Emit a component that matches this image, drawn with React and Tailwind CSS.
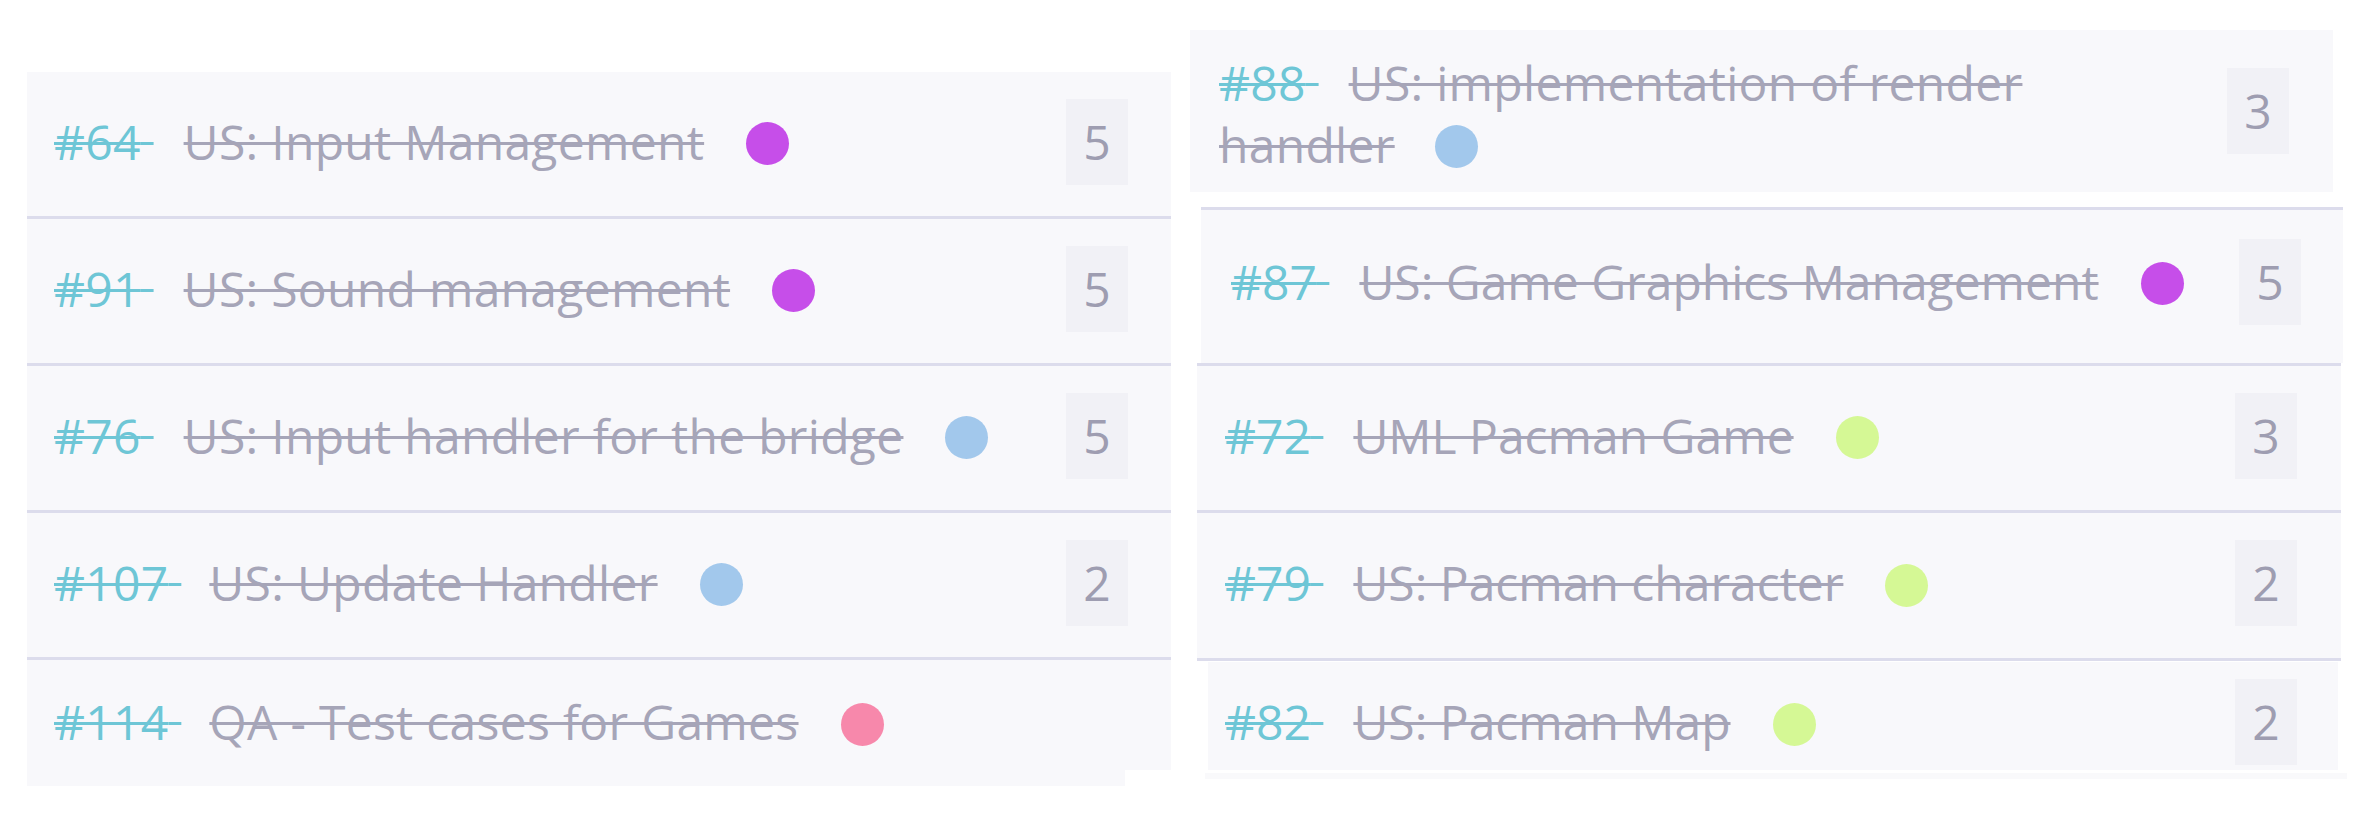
import React from "react";

const FONT = { fontFamily: '"Open Sans", "Noto Sans", sans-serif' };

function Item({ id, title, dot, idGap = "ml-[30px]", dotGap = "ml-[42px]", extra }) {
  return (
    <div className="flex-1 min-w-0 leading-[62px]">
      <span className="line-through text-[#6ec6d6] decoration-[3px]">{id}{"\u00a0"}</span>
      <span className={`${idGap} line-through text-[#a6a5b8] decoration-[3px]`}>{title}</span>
      {extra}
      <span className={`${dotGap} inline-block w-[43px] h-[43px] rounded-full align-middle relative -top-[3px] ${dot}`} />
    </div>
  );
}

function Badge({ n }) {
  return (
    <div className="w-[62px] h-[86px] bg-[#f1f1f6] flex items-center justify-center text-[#9e9db1] shrink-0">
      {n}
    </div>
  );
}

const PURPLE = "bg-[#c64ee9]";
const BLUE = "bg-[#a2c8ec]";
const GREEN = "bg-[#d5f895]";
const PINK = "bg-[#f788ab]";

export default function App() {
  return (
    <div
      className="w-[2372px] h-[820px] bg-white flex items-start overflow-hidden text-[48px]"
      style={FONT}
    >
      {/* Left column */}
      <div className="ml-[27px] mt-[72px] w-[1144px] flex flex-col tracking-[0.3px]">
        <div className="h-[147px] flex items-center bg-[#f8f8fb] border-b-[3px] border-[#dcdcec] pl-[27px] pr-[43px] pb-[5px]">
          <Item id="#64" title="US: Input Management" dot={PURPLE} />
          <Badge n="5" />
        </div>
        <div className="h-[147px] flex items-center bg-[#f8f8fb] border-b-[3px] border-[#dcdcec] pl-[27px] pr-[43px] pb-[5px]">
          <Item id="#91" title="US: Sound management" dot={PURPLE} />
          <Badge n="5" />
        </div>
        <div className="h-[147px] flex items-center bg-[#f8f8fb] border-b-[3px] border-[#dcdcec] pl-[27px] pr-[43px] pb-[5px]">
          <Item id="#76" title="US: Input handler for the bridge" dot={BLUE} />
          <Badge n="5" />
        </div>
        <div className="h-[147px] flex items-center bg-[#f8f8fb] border-b-[3px] border-[#dcdcec] pl-[27px] pr-[43px] pb-[5px]">
          <Item id="#107" title="US: Update Handler" dot={BLUE} idGap="ml-[28px]" />
          <Badge n="2" />
        </div>
        <div className="h-[110px] flex items-center bg-[#f8f8fb] pl-[27px] pr-[43px] pt-[14px]">
          <Item id="#114" title="QA - Test cases for Games" dot={PINK} idGap="ml-[28px]" />
        </div>
        <div className="h-[16px] w-[1098px] bg-[#f8f8fb]" />
      </div>

      {/* Right column */}
      <div className="ml-[19px] mt-[30px] w-[1160px] flex flex-col">
        <div className="w-[1143px] h-[162px] flex items-center bg-[#f8f8fb] pl-[29px] pr-[44px] tracking-[0.3px]">
          <div className="flex-1 min-w-0 leading-[62px] pt-[5px]">
            <span className="line-through text-[#6ec6d6] decoration-[3px]">#88{"\u00a0"}</span>
            <span className="ml-[30px] line-through text-[#a6a5b8] decoration-[3px]">US: implementation of render</span>
            <br />
            <span className="line-through text-[#a6a5b8] decoration-[3px]">handler</span>
            <span className="ml-[40px] inline-block w-[43px] h-[43px] rounded-full align-middle relative -top-[3px] bg-[#a2c8ec]" />
          </div>
          <Badge n="3" />
        </div>

        <div className="ml-[11px] mt-[15px] w-[1142px] h-[156px] flex items-center bg-[#f8f8fb] border-t-[3px] border-[#dcdcec] pl-[30px] pr-[42px] pb-[10px]">
          <Item id="#87" title="US: Game Graphics Management" dot={PURPLE} />
          <Badge n="5" />
        </div>

        <div className="ml-[7px] w-[1144px] flex flex-col border-t-[3px] border-[#dcdcec]">
          <div className="h-[147px] flex items-center bg-[#f8f8fb] border-b-[3px] border-[#dcdcec] pl-[28px] pr-[44px] pb-[5px]">
            <Item id="#72" title="UML Pacman Game" dot={GREEN} />
            <Badge n="3" />
          </div>
          <div className="h-[148px] flex items-center bg-[#f8f8fb] border-b-[3px] border-[#dcdcec] pl-[28px] pr-[44px] pb-[5px]">
            <Item id="#79" title="US: Pacman character" dot={GREEN} />
            <Badge n="2" />
          </div>
        </div>

        <div className="ml-[18px] mt-[1px] w-[1130px] h-[108px] flex items-center bg-[#f8f8fb] pl-[17px] pr-[41px] pt-[12px]">
          <Item id="#82" title="US: Pacman Map" dot={GREEN} />
          <Badge n="2" />
        </div>
        <div className="ml-[15px] mt-[3px] w-[1142px] h-[6px] bg-[#f9f9fb]" />
      </div>
    </div>
  );
}
